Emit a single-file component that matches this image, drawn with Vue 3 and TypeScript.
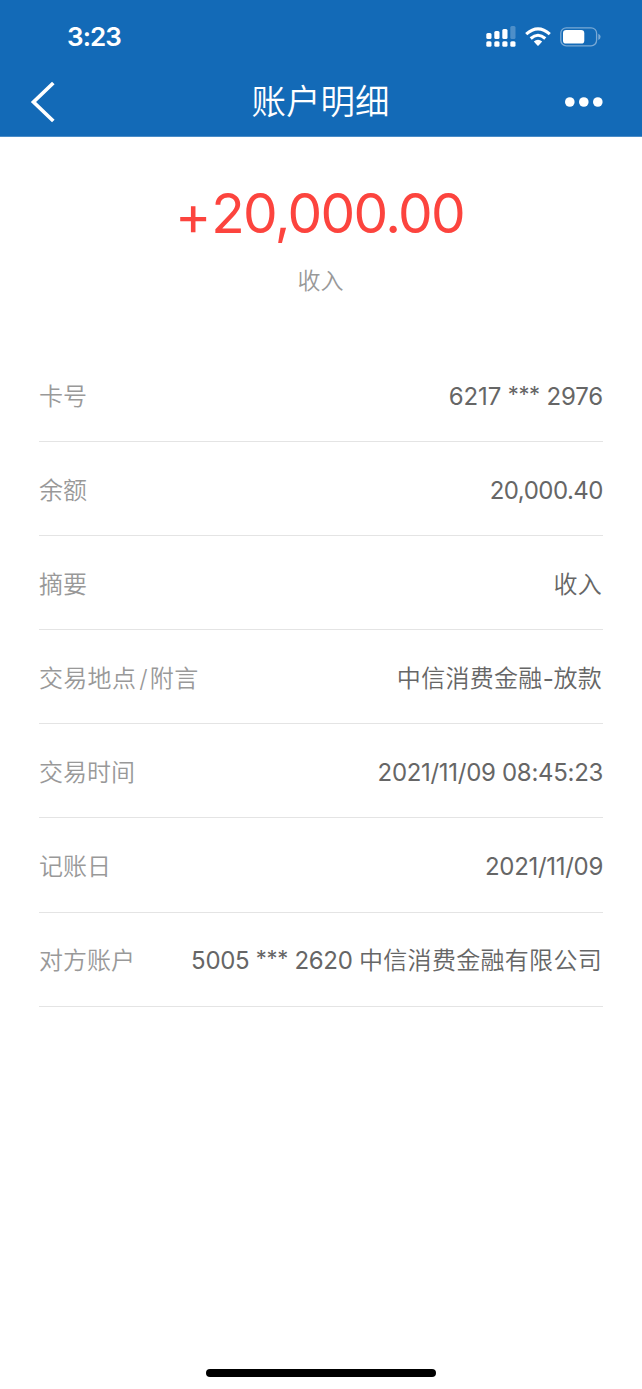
<script setup lang="ts">
interface Part { text: string; cls: string }
interface Row { label: Part[]; value: Part[]; kind: string }
const cn = (text: string): Part => ({ text, cls: 'cn' })
const num = (text: string): Part => ({ text, cls: 'num' })
const mask: Part = { text: '***', cls: 'mask' }
const rows: Row[] = [
  { label: [cn('卡号')], value: [num('6217 '), mask, num(' 2976')], kind: 'digits card' },
  { label: [cn('余额')], value: [num('20,000.40')], kind: 'digits balance' },
  { label: [cn('摘要')], value: [cn('收入')], kind: 'summary' },
  { label: [cn('交易地点'), { text: '/', cls: 'slash' }, cn('附言')], value: [cn('中信消费金融'), num('-'), cn('放款')], kind: 'place' },
  { label: [cn('交易时间')], value: [num('2021/11/09 08:45:23')], kind: 'digits time' },
  { label: [cn('记账日')], value: [num('2021/11/09')], kind: 'date' },
  { label: [cn('对方账户')], value: [num('5005 '), mask, num(' 2620 '), cn('中信消费金融有限公司')], kind: 'party' },
]
const bars = [
  { x: 0, y: 7, h: 6 },
  { x: 8, y: 5, h: 8 },
  { x: 16, y: 3, h: 10 },
]
const dots = [0, 1, 2, 3]
</script>

<template>
  <div class="page">
    <header class="head">
      <div class="status">
        <span class="clock">3:23</span>
        <div class="indicators">
          <svg class="signal" width="30" height="22" viewBox="0 0 30 22" fill="#fff">
            <rect v-for="b in bars" :key="b.x" :x="b.x + 0.3" :y="b.y" width="5.2" :height="b.h" rx="1.5" />
            <rect x="24.3" y="0" width="5.2" height="13" rx="1.5" opacity=".25" />
            <rect v-for="i in dots" :key="i" :x="i * 8 + 0.3" y="15.2" width="5.2" height="5.6" rx="1.5" />
          </svg>
          <svg class="wifi" width="26" height="20" viewBox="0 0 26 20" fill="none" stroke="#fff" stroke-width="3.1">
            <path d="M1.2 7.2Q13-3.6 24.8 7.2" />
            <path d="M5.7 11.5Q13 5 20.3 11.5" />
            <path d="M8.8 14.5Q13 11.2 17.2 14.5L13.6 18.4Q13 19 12.4 18.4Z" fill="#fff" stroke="none" />
          </svg>
          <svg class="battery" width="41" height="20" viewBox="0 0 41 20">
            <rect x=".8" y=".8" width="35.8" height="18" rx="5.5" fill="none" stroke="#79a9d5" stroke-width="1.3" />
            <rect x="3" y="3" width="21.3" height="13.6" rx="3.2" fill="#fff" />
            <path d="M38.3 6.7Q40.6 7.6 40.6 9.8T38.3 12.9Z" fill="#79a9d5" />
          </svg>
        </div>
      </div>
      <nav class="nav">
        <svg class="back" width="26" height="42" viewBox="0 0 26 42" fill="none" stroke="#fff" stroke-width="3.7"><path d="M23.3 2L3.5 21L23.3 40" /></svg>
        <h1>账户明细</h1>
        <svg class="more" width="38" height="10" viewBox="0 0 38 10" fill="#fff"><circle cx="4.8" cy="5" r="4.8" /><circle cx="18.8" cy="5" r="4.8" /><circle cx="32.8" cy="5" r="4.8" /></svg>
      </nav>
    </header>
    <main>
      <div class="amount"><span class="plus">+</span>20,000.00</div>
      <div class="type">收入</div>
      <dl>
        <div v-for="row in rows" :key="row.kind" class="row" :class="row.kind">
          <dt><span v-for="(p, i) in row.label" :key="i" :class="p.cls">{{ p.text }}</span></dt>
          <dd><span v-for="(p, i) in row.value" :key="i" :class="p.cls">{{ p.text }}</span></dd>
        </div>
      </dl>
    </main>
    <div class="home"></div>
  </div>
</template>

<style>
body { margin: 0; background: #fff; }
</style>
<style scoped>
.page { width: 642px; height: 1389px; display: flex; flex-direction: column; background: #fff; overflow: hidden; font-family: Inter, "Noto Sans CJK SC", sans-serif; font-weight: 400; font-feature-settings: "calt" 0; }
.head { height: 137px; border-bottom: 1px solid #4a8cc7; box-sizing: border-box; background: #136ab7; color: #fff; flex: none; }
.status { height: 68px; box-sizing: border-box; padding: 20px 41px 0 67px; display: flex; justify-content: space-between; }
.clock { font-size: 26px; line-height: 34px; font-weight: 600; letter-spacing: -.9px; }
.indicators { display: flex; align-items: flex-start; padding-top: 6px; }
.wifi { margin: 1px 0 0 9px; }
.battery { margin: 1px 0 0 9px; }
.nav { height: 68px; padding: 0 39px 0 30px; display: flex; align-items: center; justify-content: space-between; }
h1 { margin: 0 0 6px 20px; font-family: "Noto Sans CJK SC", sans-serif; font-size: 34.5px; line-height: 50px; font-weight: 350; }
main { flex: 1; padding: 0 39px; }
.amount { margin-top: 43px; height: 66px; line-height: 66px; padding-right: 3px; text-align: center; font-size: 55px; color: #fc443e; white-space: nowrap; letter-spacing: -1.65px; }
.plus { margin-right: 1.5px; line-height: 0; vertical-align: -2px; }
.type { margin-top: 17px; height: 36px; line-height: 36px; padding-right: 1px; font-size: 23px; color: #999; text-align: center; font-weight: 350; }
dl { margin: 49px 0 0; }
.row { height: 94.1px; box-sizing: border-box; padding-top: 2px; border-bottom: 1.5px solid #e4e4e4; display: flex; align-items: center; justify-content: space-between; font-size: 24px; line-height: 36px; white-space: pre; }
dt { color: #999; font-weight: 350; }
dd { margin: 0; color: #666; }
.cn { font-family: "Noto Sans CJK SC", sans-serif; font-weight: 350; }
dd .cn, .place dt { letter-spacing: .3px; }
.summary dd, .place dd, .party dd { padding-right: 1px; }
.num { letter-spacing: -.3px; }
.card .num { letter-spacing: -.15px; }
.mask { font-size: 22px; letter-spacing: -.3px; line-height: 0; vertical-align: 3px; }
.balance .num { letter-spacing: -.5px; }
.slash { padding: 0 2px 0 3px; }
.digits dd { padding-top: 2px; }
.date dd { padding-top: 2px; }
.home { width: 230px; height: 8px; border-radius: 4px; background: #000; margin: 0 auto 12px; flex: none; }
</style>
